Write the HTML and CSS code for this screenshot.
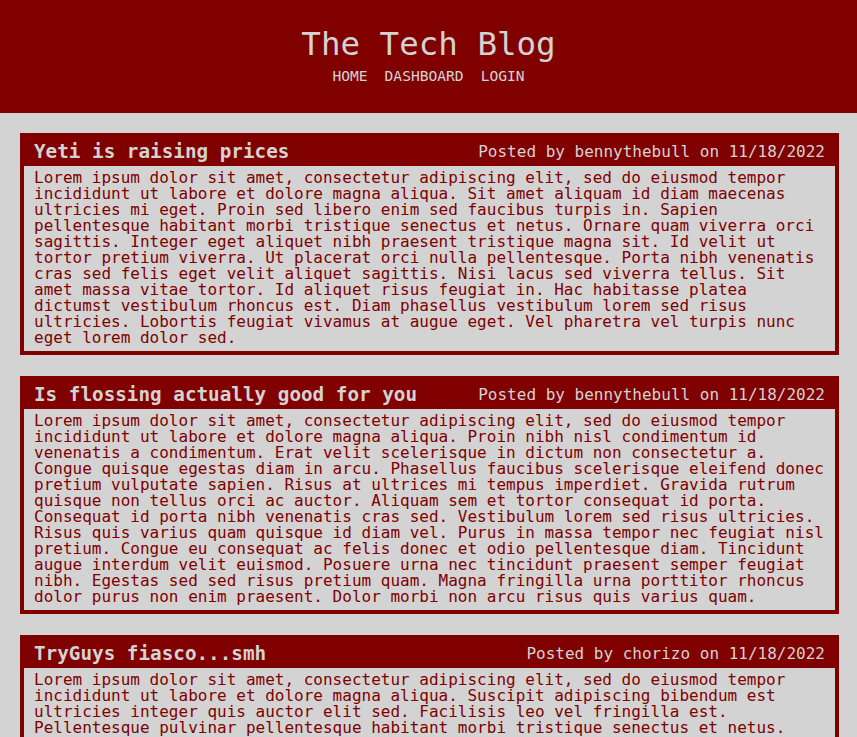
FILE: index.html
```html
<!DOCTYPE html>
<html lang="en">
<head>
<meta charset="utf-8">
<title>The Tech Blog</title>
<link rel="stylesheet" href="styles.css">
</head>
<body>
<header class="site-header">
  <h1 class="site-title">The Tech Blog</h1>
  <nav class="site-nav">
    <a href="#" class="nav-link">HOME</a>
    <a href="#" class="nav-link">DASHBOARD</a>
    <a href="#" class="nav-link">LOGIN</a>
  </nav>
</header>
<main class="posts">
  <article class="post">
    <div class="post-head">
      <h2 class="post-title">Yeti is raising prices</h2>
      <span class="post-meta">Posted by bennythebull on 11/18/2022</span>
    </div>
    <p class="post-body">Lorem ipsum dolor sit amet, consectetur adipiscing elit, sed do eiusmod tempor incididunt ut labore et dolore magna aliqua. Sit amet aliquam id diam maecenas ultricies mi eget. Proin sed libero enim sed faucibus turpis in. Sapien pellentesque habitant morbi tristique senectus et netus. Ornare quam viverra orci sagittis. Integer eget aliquet nibh praesent tristique magna sit. Id velit ut tortor pretium viverra. Ut placerat orci nulla pellentesque. Porta nibh venenatis cras sed felis eget velit aliquet sagittis. Nisi lacus sed viverra tellus. Sit amet massa vitae tortor. Id aliquet risus feugiat in. Hac habitasse platea dictumst vestibulum rhoncus est. Diam phasellus vestibulum lorem sed risus ultricies. Lobortis feugiat vivamus at augue eget. Vel pharetra vel turpis nunc eget lorem dolor sed.</p>
  </article>
  <article class="post">
    <div class="post-head">
      <h2 class="post-title">Is flossing actually good for you</h2>
      <span class="post-meta">Posted by bennythebull on 11/18/2022</span>
    </div>
    <p class="post-body">Lorem ipsum dolor sit amet, consectetur adipiscing elit, sed do eiusmod tempor incididunt ut labore et dolore magna aliqua. Proin nibh nisl condimentum id venenatis a condimentum. Erat velit scelerisque in dictum non consectetur a. Congue quisque egestas diam in arcu. Phasellus faucibus scelerisque eleifend donec pretium vulputate sapien. Risus at ultrices mi tempus imperdiet. Gravida rutrum quisque non tellus orci ac auctor. Aliquam sem et tortor consequat id porta. Consequat id porta nibh venenatis cras sed. Vestibulum lorem sed risus ultricies. Risus quis varius quam quisque id diam vel. Purus in massa tempor nec feugiat nisl pretium. Congue eu consequat ac felis donec et odio pellentesque diam. Tincidunt augue interdum velit euismod. Posuere urna nec tincidunt praesent semper feugiat nibh. Egestas sed sed risus pretium quam. Magna fringilla urna porttitor rhoncus dolor purus non enim praesent. Dolor morbi non arcu risus quis varius quam.</p>
  </article>
  <article class="post">
    <div class="post-head">
      <h2 class="post-title">TryGuys fiasco...smh</h2>
      <span class="post-meta">Posted by chorizo on 11/18/2022</span>
    </div>
    <p class="post-body">Lorem ipsum dolor sit amet, consectetur adipiscing elit, sed do eiusmod tempor incididunt ut labore et dolore magna aliqua. Suscipit adipiscing bibendum est ultricies integer quis auctor elit sed. Facilisis leo vel fringilla est. Pellentesque pulvinar pellentesque habitant morbi tristique senectus et netus. Amet consectetur adipiscing elit ut aliquam purus sit amet. Nunc sed id semper risus in hendrerit gravida rutrum quisque.</p>
  </article>
</main>
</body>
</html>
```
FILE: styles.css
```css
* { box-sizing: border-box; }

html, body {
  margin: 0;
  padding: 0;
}

body {
  background: #d3d3d3;
  color: #800000;
  font-family: "DejaVu Sans Mono", "Liberation Mono", monospace;
}

.site-header {
  background: #800000;
  color: #d3d3d3;
  height: 113px;
  padding-top: 24px;
  text-align: center;
}

.site-title {
  margin: 0;
  font-size: 32.5px;
  font-weight: normal;
  line-height: 40px;
}

.site-nav {
  margin-top: 2px;
  display: flex;
  justify-content: center;
  gap: 17px;
}

.nav-link {
  color: #d3d3d3;
  text-decoration: none;
  font-size: 14.6px;
  line-height: 20px;
}

.posts {
  padding: 20px 18px 20px 20px;
  display: flex;
  flex-direction: column;
  gap: 21px;
}

.post {
  border: 4px solid #800000;
  background: #d3d3d3;
}

.post-head {
  background: #800000;
  color: #d3d3d3;
  display: flex;
  justify-content: space-between;
  align-items: center;
  padding: 0 10px;
  height: 29px;
}

.post-title {
  margin: 0;
  font-size: 19.3px;
  font-weight: bold;
  line-height: 24px;
}

.post-meta {
  font-size: 16px;
  line-height: 20px;
}

.post-body {
  margin: 0;
  padding: 4px 10px 5px 10px;
  font-size: 16px;
  line-height: 16px;
}
```
